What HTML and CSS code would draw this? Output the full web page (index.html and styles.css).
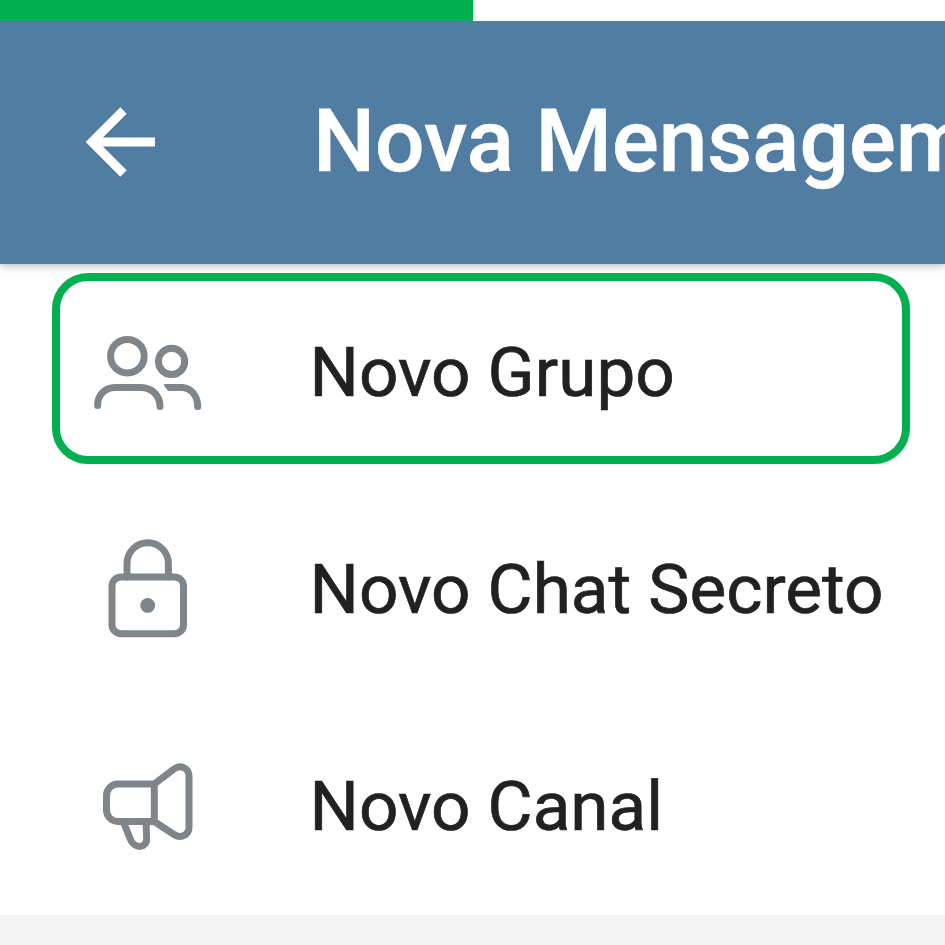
FILE: index.html
```html
<!DOCTYPE html>
<html lang="pt-BR">
<head>
<meta charset="utf-8">
<title>Nova Mensagem</title>
<link rel="stylesheet" href="styles.css">
</head>
<body>
<main class="screen">
  <div class="progress"><div class="progress-value"></div></div>
  <header class="app-bar">
    <svg class="back" viewBox="0 0 110 100" aria-label="Voltar"><path d="M85 52H22M53.500 20.500L22 52L53.500 83.500"/></svg>
    <h1 class="title">Nova Mensagem</h1>
  </header>
  <ul class="menu">
    <li class="item selected">
      <svg class="icon" viewBox="80 302 140 140">
        <circle cx="127.400" cy="356.200" r="16.800"/>
        <circle cx="171.600" cy="361.400" r="13.100"/>
        <path d="M97.600 405.500C97.600 395 105 387.500 115 387.500H141C152 387.500 160 396 160 406.500"/>
        <path class="solid" d="M164.200 383.900H181C193 383.900 201.300 394 201.300 406.500A3.550 3.550 0 0 1 194.200 406.500C194.200 397 189 391 181 391H168.200L164.200 386Z"/>
      </svg>
      <span class="label">Novo Grupo</span>
    </li>
    <li class="item">
      <svg class="icon" viewBox="80 519 140 140">
        <rect x="112" y="577" width="71.500" height="56.700" rx="9"/>
        <path d="M127 577V563.500A20.700 20.700 0 0 1 168.400 563.500V577"/>
        <circle class="solid" cx="147.700" cy="605.400" r="7.400"/>
      </svg>
      <span class="label">Novo Chat Secreto</span>
    </li>
    <li class="item">
      <svg class="icon" viewBox="80 736 140 140">
        <path d="M154.300 784H118A11.500 11.500 0 0 0 106.500 795.500V810A11.500 11.500 0 0 0 118 821.500H154.300ZM154.300 784L174 769C181 764 189 768.500 189 776V827C189 835 181 839 174 834.500L154.300 821.500"/>
        <path d="M123.500 822L130 838.500C134.500 850 147 848 146.700 838.500L146 822"/>
      </svg>
      <span class="label">Novo Canal</span>
    </li>
  </ul>
  <div class="section-gap"></div>
</main>
</body>
</html>
```
FILE: styles.css
```css
*,
*::after {
  box-sizing: border-box;
}

body {
  margin: 0;
  background: #fff;
  font-family: Roboto, "Liberation Sans", sans-serif;
}

.screen {
  display: flex;
  flex-direction: column;
  width: 945px;
  height: 945px;
  overflow: hidden;
}

.progress {
  position: relative;
  z-index: 1;
  flex: none;
  height: 21px;
  background: #fff;
}

.progress-value {
  width: 473px;
  height: 100%;
  background: #00b050;
}

.app-bar {
  display: flex;
  align-items: flex-start;
  flex: none;
  height: 243px;
  padding-left: 70px;
  background: #517da2;
  box-shadow: 0 2px 8px rgba(0, 0, 0, 0.28);
}

.back {
  flex: none;
  width: 110px;
  height: 100px;
  margin-top: 69px;
  fill: none;
  stroke: #fff;
  stroke-width: 9;
}

.title {
  margin: 0 0 0 133px;
  color: #fff;
  font-size: 87.400px;
  font-weight: 500;
  line-height: 240px;
  white-space: nowrap;
  -webkit-text-stroke: 0.600px #fff;
}

.menu {
  flex: none;
  height: 651px;
  margin: -1px 0 0;
  padding: 0;
  list-style: none;
}

.item {
  position: relative;
  display: flex;
  align-items: center;
  height: 217px;
  padding-left: 80px;
}

.selected::after {
  content: "";
  position: absolute;
  top: 10px;
  left: 52px;
  width: 858px;
  height: 191px;
  border: 8px solid #00b050;
  border-radius: 36px;
}

.icon {
  flex: none;
  width: 140px;
  height: 140px;
  fill: none;
  stroke: #7f8589;
  stroke-width: 7;
  stroke-linecap: round;
  stroke-linejoin: round;
}

.icon .solid {
  fill: #7f8589;
  stroke: none;
}

.label {
  margin-left: 89.500px;
  padding-top: 2px;
  color: #212121;
  font-size: 69.250px;
  line-height: 215px;
  white-space: nowrap;
  -webkit-text-stroke: 0.700px #212121;
}

.section-gap {
  flex: 1;
  margin-top: 1px;
  background: #f4f4f4;
}
```
